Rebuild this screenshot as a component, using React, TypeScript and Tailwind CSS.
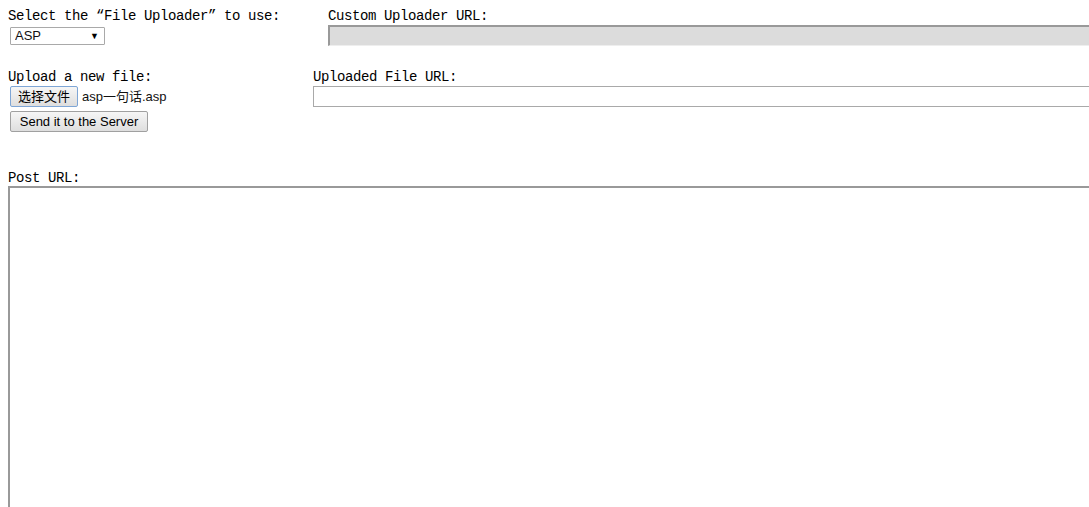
import React, { useState } from 'react';

const mono = "font-['Liberation_Mono','DejaVu_Sans_Mono',monospace] text-[14px] tracking-[-0.4px] leading-[16px]";
const sans = "font-['Liberation_Sans','Noto_Sans_CJK_SC',sans-serif] text-[13px]";
const btn =
  'h-[21px] px-[6px] rounded-[2px] border bg-gradient-to-b from-[#f6f6f6] to-[#dedede] text-black leading-[19px]';

const App: React.FC = () => {
  const [uploader, setUploader] = useState('ASP');

  return (
    <div className="min-h-screen w-[1089px] overflow-hidden bg-white text-black">
      <div className="flex pt-[8px] pl-[8px]">
        <div className="w-[320px] shrink-0">
          <div className={mono}>Select the “File Uploader” to use:</div>
          <div className="relative ml-[2px] mt-[3px] h-[18px] w-[95px]">
            <select
              value={uploader}
              onChange={(e) => setUploader(e.target.value)}
              className={`${sans} block h-[18px] w-[95px] appearance-none rounded-[1px] border border-[#a9a9a9] bg-white pl-[4px] leading-[16px] text-[#111] outline-none`}
            >
              <option>ASP</option>
              <option>PHP</option>
              <option>JSP</option>
              <option>Custom</option>
            </select>
            <span className="pointer-events-none absolute right-[6px] top-[3px] text-[9px] leading-[12px] text-black">▼</span>
          </div>
        </div>
        <div className="flex-1">
          <div className={mono}>Custom Uploader URL:</div>
          <input
            disabled
            className="mt-[1px] block h-[21px] w-[770px] border-t-2 border-l-2 border-b border-r border-t-[#999] border-l-[#999] border-b-[#eee] border-r-[#eee] bg-[#dcdcdc]"
          />
        </div>
      </div>

      <div className="mt-[23px] flex pl-[8px]">
        <div className="w-[305px] shrink-0">
          <div className={mono}>Upload a new file:</div>
          <div className="ml-[2px] mt-[1px] flex items-center">
            <button className={`${btn} ${sans} w-[68px] border-[#7ea6d6]`}>选择文件</button>
            <span className={`${sans} ml-[4px] text-[#111]`}>asp一句话.asp</span>
          </div>
          <button className={`${btn} ${sans} ml-[2px] mt-[4px] block w-[138px] border-[#a0a0a0]`}>
            Send it to the Server
          </button>
        </div>
        <div className="flex-1">
          <div className={mono}>Uploaded File URL:</div>
          <input className="mt-[1px] block h-[21px] w-[790px] border border-[#a9a9a9] bg-white outline-none" />
        </div>
      </div>

      <div className="mt-[38px] pl-[8px]">
        <div className={mono}>Post URL:</div>
        <textarea className="mt-[0px] block h-[340px] w-[1100px] resize-none border-t-2 border-l-2 border-t-[#999] border-l-[#999] bg-white outline-none" />
      </div>
    </div>
  );
};

export default App;
